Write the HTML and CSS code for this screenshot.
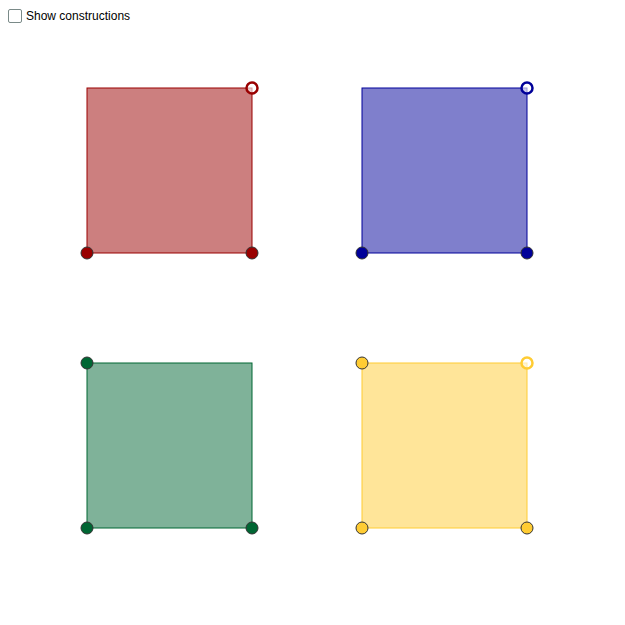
FILE: index.html
```html
<!DOCTYPE html>
<html>
<head>
<meta charset="utf-8">
<link rel="stylesheet" href="styles.css">
</head>
<body>
<div class="stage">
  <label class="toggle">
    <span class="box"></span>
    <span class="label-text">Show constructions</span>
  </label>
  <svg class="canvas" width="625" height="625" viewBox="0 0 625 625">
    <g class="red">
      <rect x="87" y="88" width="165" height="165" class="sq"/>
      <circle cx="87" cy="253" r="6" class="pt"/>
      <circle cx="252" cy="253" r="6" class="pt"/>
      <circle cx="252" cy="88" r="5.5" class="open"/>
    </g>
    <g class="blue">
      <rect x="362" y="88" width="165" height="165" class="sq"/>
      <circle cx="362" cy="253" r="6" class="pt"/>
      <circle cx="527" cy="253" r="6" class="pt"/>
      <circle cx="527" cy="88" r="5.5" class="open"/>
    </g>
    <g class="green">
      <rect x="87" y="363" width="165" height="165" class="sq"/>
      <circle cx="87" cy="363" r="6" class="pt"/>
      <circle cx="87" cy="528" r="6" class="pt"/>
      <circle cx="252" cy="528" r="6" class="pt"/>
    </g>
    <g class="yellow">
      <rect x="362" y="363" width="165" height="165" class="sq"/>
      <circle cx="362" cy="363" r="6" class="pt"/>
      <circle cx="362" cy="528" r="6" class="pt"/>
      <circle cx="527" cy="528" r="6" class="pt"/>
      <circle cx="527" cy="363" r="5.5" class="open"/>
    </g>
  </svg>
</div>
</body>
</html>
```
FILE: styles.css
```css
html, body {
  margin: 0;
  padding: 0;
  background: #ffffff;
}
.stage {
  position: relative;
  width: 625px;
  height: 625px;
  overflow: hidden;
  font-family: "Liberation Sans", Arial, sans-serif;
}
.canvas {
  position: absolute;
  left: 0;
  top: 0;
}
.toggle {
  position: relative;
  z-index: 1;
  display: flex;
  align-items: center;
  gap: 4px;
  padding: 9px 0 0 8px;
  font-size: 12px;
  color: #000;
  line-height: 14px;
}
.box {
  width: 12px;
  height: 12px;
  border: 1px solid #7a8a88;
  border-radius: 2px;
  background: #fff;
  box-sizing: content-box;
}
.sq { stroke-width: 1; }
.pt { stroke: #333333; stroke-width: 1; }
.open { fill: #ffffff; fill-opacity: 0.6; stroke-width: 2.5; }

.red .sq { fill: #cc7f7f; stroke: #990000; }
.red .pt { fill: #990000; }
.red .open { stroke: #990000; }

.blue .sq { fill: #7f7fcc; stroke: #000099; }
.blue .pt { fill: #000099; }
.blue .open { stroke: #000099; }

.green .sq { fill: #7fb299; stroke: #006633; }
.green .pt { fill: #006633; }

.yellow .sq { fill: #ffe599; stroke: #ffcc33; }
.yellow .pt { fill: #ffcc33; }
.yellow .open { stroke: #ffcc33; }
```
